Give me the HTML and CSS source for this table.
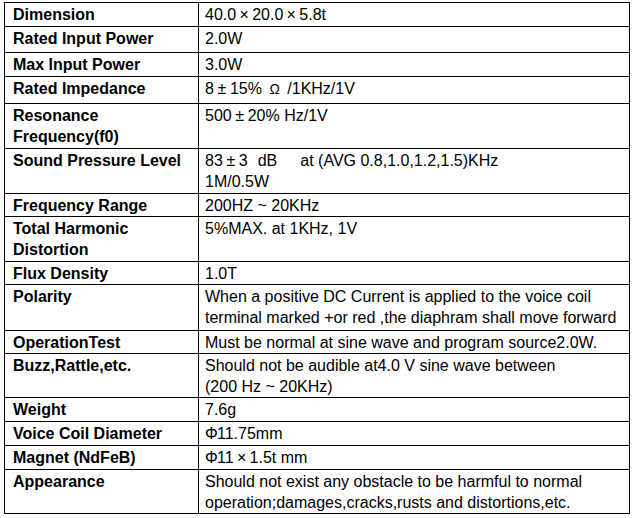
FILE: index.html
```html
<!DOCTYPE html>
<html>
<head>
<meta charset="utf-8">
<link rel="stylesheet" href="styles.css">
</head>
<body>
<div class="page">
<table class="spec">
  <colgroup><col class="c-label"><col class="c-value"></colgroup>
  <tr><th>Dimension</th><td>40.0<span class="sym">×</span>20.0<span class="sym">×</span>5.8t</td></tr>
  <tr class="loose"><th>Rated Input Power</th><td>2.0W</td></tr>
  <tr><th>Max Input Power</th><td>3.0W</td></tr>
  <tr class="loose"><th>Rated Impedance</th><td>8<span class="sym">±</span>15% <span class="ohm">Ω</span> /1KHz/1V</td></tr>
  <tr><th>Resonance<br>Frequency(f0)</th><td>500<span class="sym">±</span>20% Hz/1V</td></tr>
  <tr><th>Sound Pressure Level</th><td>83<span class="sym">±</span>3<span class="gap-s"></span>dB<span class="gap-l"></span>at (AVG 0.8,1.0,1.2,1.5)KHz<br>1M/0.5W</td></tr>
  <tr class="tight"><th>Frequency Range</th><td>200HZ ~ 20KHz</td></tr>
  <tr><th>Total Harmonic<br>Distortion</th><td>5%MAX. at 1KHz, 1V</td></tr>
  <tr class="tight"><th>Flux Density</th><td>1.0T</td></tr>
  <tr class="roomy"><th>Polarity</th><td>When a positive DC Current is applied to the voice coil<br>terminal marked +or red ,the diaphram shall move forward</td></tr>
  <tr class="tight"><th>OperationTest</th><td>Must be normal at sine wave and program source2.0W.</td></tr>
  <tr class="tight"><th>Buzz,Rattle,etc.</th><td>Should not be audible at4.0 V sine wave between<br>(200 Hz ~ 20KHz)</td></tr>
  <tr><th>Weight</th><td>7.6g</td></tr>
  <tr><th>Voice Coil Diameter</th><td><span class="phi">Φ</span>11.75mm</td></tr>
  <tr><th>Magnet (NdFeB)</th><td><span class="phi">Φ</span>11<span class="sym">×</span>1.5t mm</td></tr>
  <tr class="tight"><th>Appearance</th><td>Should not exist any obstacle to be harmful to normal<br>operation;damages,cracks,rusts and distortions,etc.</td></tr>
</table>
</div>
</body>
</html>
```

FILE: styles.css
```css
html, body {
  margin: 0;
  padding: 0;
  background: #ffffff;
}

.page {
  padding: 2px 0 0 4px;
}

.spec {
  border-collapse: collapse;
  width: 626px;
  table-layout: fixed;
  font-family: "Liberation Sans", Arial, sans-serif;
  font-size: 16px;
  line-height: 21px;
  color: #000;
}

.c-label { width: 194px; }

.spec th,
.spec td {
  border: 1px solid #000;
  padding: 1px 0 1px 6px;
  vertical-align: top;
  text-align: left;
  white-space: nowrap;
  overflow: hidden;
}

.spec th {
  font-weight: bold;
  padding-left: 8px;
}

.spec td {
  font-weight: normal;
}

.spec .loose th,
.spec .loose td {
  padding-bottom: 3px;
}

.spec .roomy th,
.spec .roomy td {
  padding-bottom: 2px;
}

.spec .tight th,
.spec .tight td {
  padding-bottom: 0;
}

.sym {
  display: inline-block;
  width: 16px;
  text-align: center;
}

.ohm {
  font-size: 14px;
  margin: 0 3px;
}

.phi {
  display: inline-block;
  width: 11px;
  margin-right: 1px;
  font-size: 16px;
}

.gap-s {
  display: inline-block;
  width: 10px;
}

.gap-l {
  display: inline-block;
  width: 23px;
}
```
